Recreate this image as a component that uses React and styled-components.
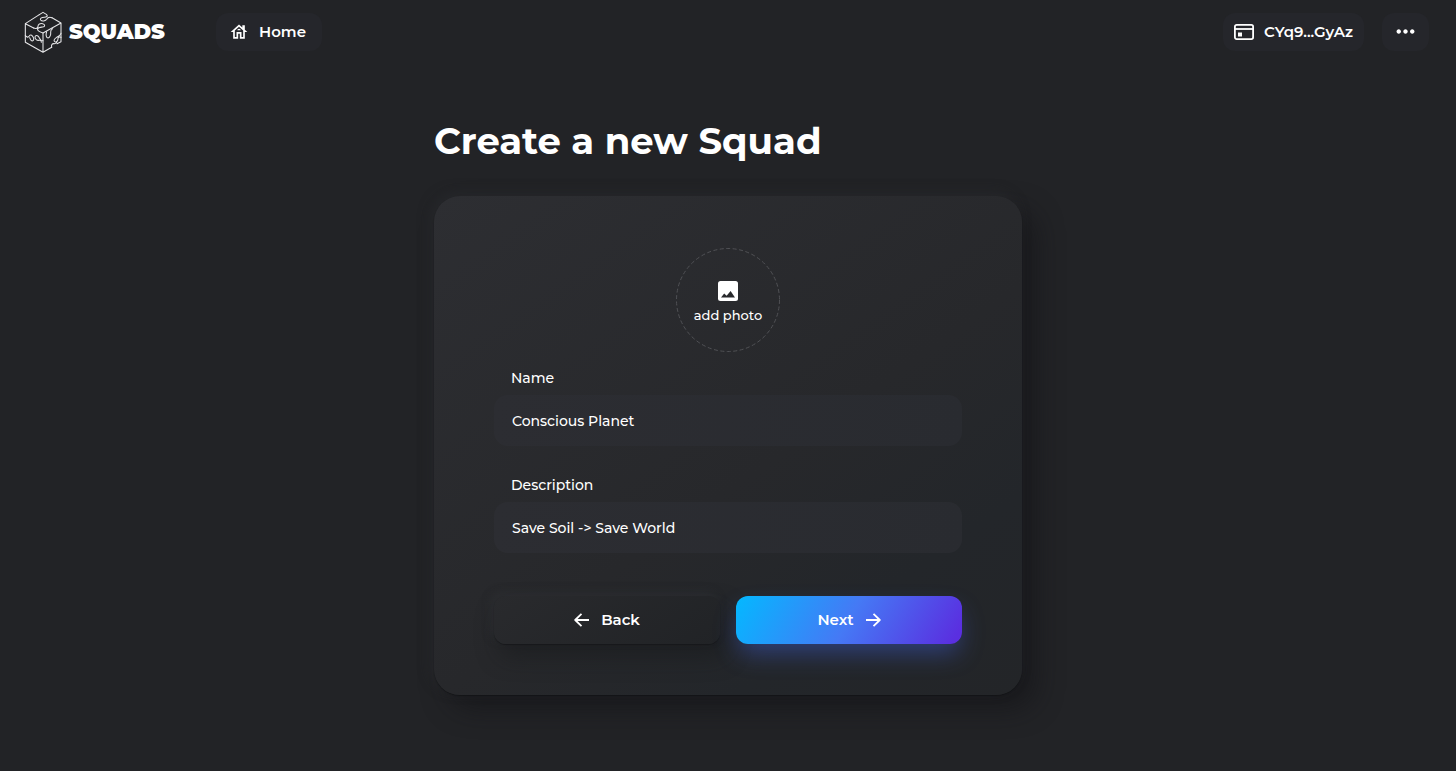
import React, { useState } from "react";
import styled, { createGlobalStyle } from "styled-components";
import { MdMoreHoriz, MdOutlineHouse } from "react-icons/md";

const GlobalStyle = createGlobalStyle`
  * {
    box-sizing: border-box;
  }
  body {
    margin: 0;
    min-height: 100vh;
    background: #222326;
    color: #fff;
    font-family: Montserrat, Inter, "Open Sans", sans-serif;
  }
  button, input {
    font-family: inherit;
    color: inherit;
  }
`;

const Header = styled.header`
  display: flex;
  align-items: center;
  height: 64px;
  padding: 0 27px 0 24px;
`;

const Brand = styled.a`
  display: flex;
  align-items: center;
  gap: 6px;
  width: 192px;
  color: #fff;
  text-decoration: none;
`;

const BrandName = styled.span`
  font-size: 21px;
  font-weight: 900;
  line-height: 20px;
`;

const NavButton = styled.button`
  display: flex;
  align-items: center;
  justify-content: center;
  gap: 10px;
  height: 38px;
  padding: ${(props) => props.$pad || "0 11px 1px"};
  border: 0;
  border-radius: 12px;
  background: #25262b;
  font-size: 15px;
  font-weight: 600;
  line-height: 18px;
  cursor: pointer;
`;

const Account = styled.div`
  display: flex;
  gap: 18px;
  margin-left: auto;
`;

const Main = styled.main`
  max-width: 588px;
  margin: 0 auto;
  padding: 53px 0 76px;
`;

const Title = styled.h1`
  margin: 0 0 31px;
  font-size: 37px;
  font-weight: 700;
  line-height: 48px;
`;

const Card = styled.form`
  display: flex;
  flex-direction: column;
  padding: 52px 60px 51px;
  border-radius: 26px;
  background: linear-gradient(145deg, #2d2e32 0%, #27282b 55%, #23262a 78%, #232528 100%);
  box-shadow: 0 1px 1px rgba(14, 15, 17, 0.6), -4px -4px 12px rgba(40, 41, 45, 0.6),
    14px 14px 26px rgba(18, 19, 22, 0.55);
`;

const PhotoButton = styled.button`
  display: flex;
  flex-direction: column;
  align-items: center;
  justify-content: center;
  gap: 4px;
  width: 104px;
  height: 104px;
  padding: 6px 0 0;
  border: 0;
  border-radius: 50%;
  background: transparent;
  font-size: 13px;
  font-weight: 500;
  line-height: 20px;
  white-space: nowrap;
  cursor: pointer;
`;

const PhotoRing = styled.svg`
  grid-area: 1 / 1;
`;

const PhotoPicker = styled.div`
  display: grid;
  justify-content: center;
  margin-bottom: 16px;

  ${PhotoButton} {
    grid-area: 1 / 1;
  }
`;

const Field = styled.div`
  display: flex;
  flex-direction: column;
  gap: 7px;
  margin-bottom: ${(props) => (props.$last ? "43px" : "29px")};
`;

const Label = styled.label`
  padding-left: 17px;
  font-size: 14px;
  font-weight: 500;
  line-height: 20px;
`;

const Input = styled.input`
  width: 100%;
  height: 51px;
  padding: 0 18px;
  border: 0;
  border-radius: 14px;
  outline: none;
  background: linear-gradient(100deg, #2c2d32, #292b30);
  font-size: 14px;
  font-weight: 500;
`;

const Actions = styled.div`
  display: grid;
  grid-template-columns: 1fr 1fr;
  gap: 16px;
`;

const ActionButton = styled.button`
  display: flex;
  align-items: center;
  justify-content: center;
  gap: 12px;
  height: 48px;
  padding: 0 0 1px;
  border: 0;
  border-radius: 12px;
  font-size: 15px;
  font-weight: 600;
  line-height: 18px;
  cursor: pointer;
  background: ${(props) =>
    props.$primary
      ? "linear-gradient(120deg, #06b6ff 2%, #4579f5 50%, #5a2fe0 96%)"
      : "linear-gradient(145deg, #292a2d, #212326)"};
  box-shadow: ${(props) =>
    props.$primary
      ? "0 12px 24px -3px rgba(62, 96, 220, 0.45)"
      : "0 1px 1px #17181b, -3px -4px 8px rgba(48, 49, 54, 0.5), 6px 12px 22px rgba(22, 23, 26, 0.5)"};
`;

function CubeLogo() {
  return (
    <svg width="39" height="42" viewBox="18 14 117 126" fill="none" stroke="#e6e6e8" strokeWidth="3.2" strokeLinecap="round" strokeLinejoin="round">
      <path d="M64 25 22 52v56l53 30 26-15M102 34l27 16v56l-12 6M22 52l25 13M75 138V80l54-30" />
      <path d="M64 25 75 18l10 6c6 5 1 9-6 9-9 0-14 4-11 8 4 5 15 3 18-2 3-6 8-8 16-5" />
      <path d="M47 65c7 3 13 0 13-5 0-6 6-10 14-8 8 2 8 9 0 10-7 1-13 1-15 5-2 5 3 8 16 13" />
      <path d="M22 88c4 5 9 6 11 2 2-5 7-5 11 0 5 6 4 13-1 14-5 0-6-5-8-10" />
      <path d="M75 103c-7 1-9-4-12-10-4-7-11-7-12-1 0 7 6 11 12 10 5-1 7 1 7 6" />
      <path d="M86 76c-3 9-2 19 4 19 6-1 9-10 8-17-1-6 1-8 6-11" />
      <path d="M129 81c-3 8-8 9-13 12-7 4-10 10-6 13 5 3 10-3 10-9 0-4 4-6 9-4M101 123c-2-8 2-12 8-11 5 0 7-2 8-6" />
    </svg>
  );
}

function WalletIcon() {
  return (
    <svg width="20" height="16" viewBox="0 0 20 16" fill="none" stroke="#fff" strokeWidth="1.8">
      <rect x="0.9" y="0.9" width="18.2" height="14.2" rx="1.8" />
      <path d="M1 5h18" />
      <rect x="4" y="8.5" width="4" height="4" fill="#fff" stroke="none" />
    </svg>
  );
}

function PhotoIcon() {
  return (
    <svg width="20" height="20" viewBox="0 0 20 20">
      <rect width="20" height="20" rx="2.5" fill="#fff" />
      <path d="M3 16.5 6.2 12.6l2.4 2.2 4-4.8 4.4 6.5z" fill="#28292c" />
    </svg>
  );
}

function ArrowIcon({ back }) {
  return (
    <svg width="15" height="14" viewBox="0 0 15 14" fill="none" stroke="#fff" strokeWidth="1.8" strokeLinejoin="round">
      <path d={back ? "M7.5.8 1.2 7l6.3 6.2M1.2 7H15" : "M7.5.8 13.8 7l-6.3 6.2M13.8 7H0"} />
    </svg>
  );
}

function App() {
  const [name, setName] = useState("Conscious Planet");
  const [description, setDescription] = useState("Save Soil -> Save World");

  return (
    <>
      <GlobalStyle />
      <Header>
        <Brand href="#">
          <CubeLogo />
          <BrandName>SQUADS</BrandName>
        </Brand>
        <NavButton $pad="0 16px 1px 13px">
          <MdOutlineHouse size={20} />
          Home
        </NavButton>
        <Account>
          <NavButton>
            <WalletIcon />
            CYq9...GyAz
          </NavButton>
          <NavButton $pad="0 10px 1px" aria-label="More">
            <MdMoreHoriz size={27} />
          </NavButton>
        </Account>
      </Header>
      <Main>
        <Title>Create a new Squad</Title>
        <Card onSubmit={(e) => e.preventDefault()}>
          <PhotoPicker>
            <PhotoRing width="104" height="104" viewBox="0 0 104 104" fill="none">
              <circle cx="52" cy="52" r="51.5" stroke="#505155" strokeDasharray="4 2.5" />
            </PhotoRing>
            <PhotoButton type="button">
              <PhotoIcon />
              add photo
            </PhotoButton>
          </PhotoPicker>
          <Field>
            <Label htmlFor="name">Name</Label>
            <Input id="name" value={name} onChange={(e) => setName(e.target.value)} />
          </Field>
          <Field $last>
            <Label htmlFor="description">Description</Label>
            <Input
              id="description"
              value={description}
              onChange={(e) => setDescription(e.target.value)}
            />
          </Field>
          <Actions>
            <ActionButton type="button">
              <ArrowIcon back />
              Back
            </ActionButton>
            <ActionButton type="submit" $primary>
              Next
              <ArrowIcon />
            </ActionButton>
          </Actions>
        </Card>
      </Main>
    </>
  );
}

export default App;
